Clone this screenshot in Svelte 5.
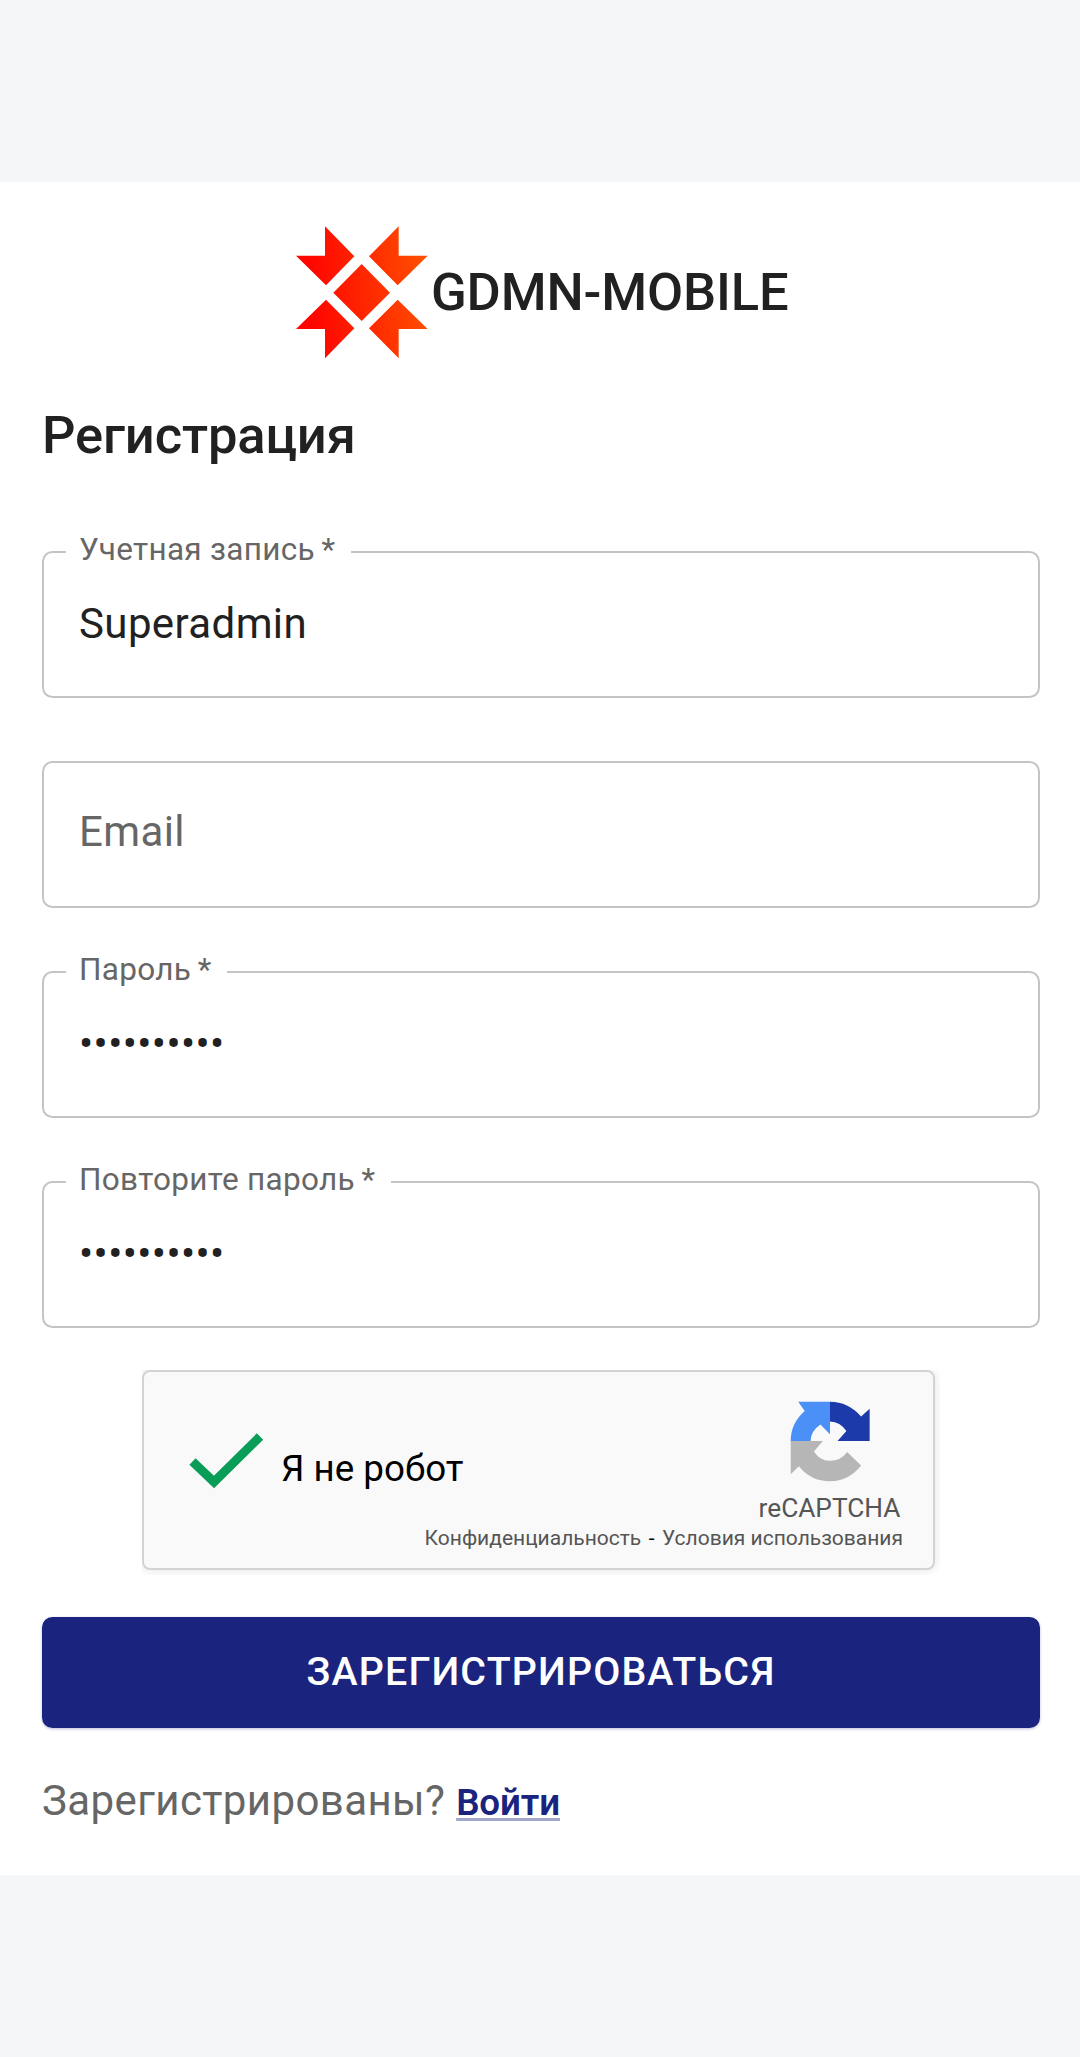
<script>
  const fields = $state([
    { id: 'login', label: 'Учетная запись', type: 'text', value: 'Superadmin', required: true },
    { id: 'email', label: 'Email', type: 'email', value: '', required: false },
    { id: 'password', label: 'Пароль', type: 'password', value: 'superadmin', required: true },
    { id: 'repeat', label: 'Повторите пароль', type: 'password', value: 'superadmin', required: true }
  ]);
</script>

<main class="page">
  <section class="panel">
    <header class="brand">
      <svg class="logo" viewBox="46 164 402 402" aria-hidden="true">
        <defs>
          <linearGradient id="flame" gradientUnits="userSpaceOnUse" x1="90" y1="300" x2="430" y2="270">
            <stop offset="0" stop-color="#ff0500" />
            <stop offset="1" stop-color="#ff4d00" />
          </linearGradient>
        </defs>
        <g fill="url(#flame)">
          <path d="M136 168 224 258 139 345 49 256H136Z" />
          <path d="M357 168V256H444L354 345 268 258Z" />
          <path d="M246 281 331 367 246 452 161 367Z" />
          <path d="M139 388 224 474 136 564V476H49Z" />
          <path d="M354 388 268 474 357 564V476H444Z" />
        </g>
      </svg>
      <span class="name">GDMN-MOBILE</span>
    </header>

    <h1>Регистрация</h1>

    <form class="fields">
      {#each fields as field (field.id)}
        <fieldset>
          {#if field.value}
            <legend><label for={field.id}>{field.label}{field.required ? '\u2009*' : ''}</label></legend>
          {/if}
          <input id={field.id} type={field.type} placeholder={field.label} bind:value={field.value} />
        </fieldset>
      {/each}
    </form>

    <div class="captcha-frame">
      <div class="captcha">
        <div class="check">
          <svg class="tick" viewBox="0 0 76 60" aria-hidden="true">
            <path d="M3.5 30.5 25 51 71 5.5" fill="none" stroke="#0a9d58" stroke-width="9" />
          </svg>
          <span>Я не робот</span>
        </div>
        <div class="badge">
          <svg class="arrows" viewBox="0 0 234 237" aria-hidden="true">
            <path fill="#4a90f7" d="M24 2H117V97L89 69Q61 88 60 117H2Q2 65 43 29Z" />
            <path fill="#1c3aa9" d="M117 2Q170 2 208 45L233 23V117H139L165 88Q147 61 117 60Z" />
            <path fill="#b6b6b6" d="M2 117H96L70 148Q88 176 117 175Q149 175 167 149L208 189Q172 235 117 235Q61 235 26 191L2 214Z" />
          </svg>
          <span class="product">reCAPTCHA</span>
        </div>
        <div class="terms"><span>Конфиденциальность</span><span class="dash">-</span><span>Условия использования</span></div>
      </div>
    </div>

    <button type="button">Зарегистрироваться</button>

    <p class="signin">Зарегистрированы? <a href="#login">Войти</a></p>
  </section>
</main>

<style>
  :global(body) {
    background: #f4f6f8;
  }

  .page {
    box-sizing: border-box;
    height: 2057px;
    padding-top: 182px;
    font-family: Roboto, sans-serif;
    color: #212121;
  }

  .panel {
    box-sizing: border-box;
    height: 1693px;
    padding: 43px 40px 0 42px;
    background: #fff;
  }

  .brand {
    display: flex;
    align-items: center;
    height: 134px;
    padding-left: 253px;
  }

  .logo {
    width: 134px;
    height: 134px;
  }

  .name,
  h1 {
    font-size: 52.5px;
    font-weight: 500;
    line-height: 84px;
    letter-spacing: -0.15px;
  }

  .name {
    margin-left: 2px;
  }

  h1 {
    margin: 34px 0 0;
  }

  .fields {
    display: grid;
    gap: 63px;
    margin-top: 74px;
  }

  fieldset {
    box-sizing: border-box;
    min-width: 0;
    height: 147px;
    margin: 0;
    padding: 0;
    border: 2px solid #c4c4c4;
    border-radius: 10.5px;
  }

  legend {
    height: 2px;
    margin-left: 22px;
    padding: 0 15.6px 0 13px;
    font-size: 31.5px;
    line-height: 2px;
    letter-spacing: 0.00938em;
    color: #666;
  }

  label {
    display: block;
    transform: translateY(-2px);
  }

  input {
    display: block;
    box-sizing: border-box;
    width: 100%;
    height: 136px;
    padding: 0 35px;
    border: 0;
    outline: 0;
    background: none;
    font: 400 42px Roboto, sans-serif;
    letter-spacing: 0.00938em;
    color: #212121;
  }

  legend + input {
    height: 140px;
  }

  input::placeholder {
    color: #666;
    opacity: 1;
  }

  .captcha-frame {
    width: 798px;
    height: 205px;
    margin: 42px 0 0 100px;
    overflow: hidden;
  }

  .captcha {
    box-sizing: border-box;
    display: grid;
    grid-template: 150px 1fr / 1fr 198px;
    width: 793px;
    height: 200px;
    border: 2px solid #d3d3d3;
    border-radius: 8px;
    background: #f9f9f9;
    box-shadow: 0 0 10px 2px rgba(0, 0, 0, 0.08);
    color: #555;
  }

  .check {
    display: flex;
    align-items: flex-start;
    gap: 16px;
    padding: 59px 0 0 45px;
    font-size: 36.75px;
    line-height: 44px;
    color: #000;
  }

  .check span {
    margin-top: 16px;
  }

  .tick {
    width: 76px;
    height: 60px;
  }

  .badge {
    display: flex;
    flex-direction: column;
    align-items: center;
    padding: 29px 9px 0 0;
  }

  .arrows {
    flex: none;
    width: 80px;
    height: 81px;
  }

  .product {
    margin-top: 10px;
    font-size: 26.25px;
    line-height: 32px;
  }

  .terms {
    grid-column: 1 / 3;
    display: flex;
    justify-content: flex-end;
    padding: 3px 30px 0 0;
    font-size: 21px;
    line-height: 26px;
  }

  .dash {
    margin: 0 7.5px;
    color: #000;
  }

  button {
    display: block;
    width: 998px;
    height: 111px;
    margin-top: 42px;
    padding: 0 0 2px;
    border: 0;
    border-radius: 10.5px;
    background: #1a237e;
    box-shadow: 0 1px 3px rgba(26, 35, 126, 0.3);
    font: 500 39.375px Roboto, sans-serif;
    letter-spacing: 0.02857em;
    text-transform: uppercase;
    color: #fff;
  }

  .signin {
    margin: 41px 0 0;
    font-size: 42px;
    line-height: 63px;
    letter-spacing: 0.00938em;
    color: #666;
  }

  a {
    font-size: 36.75px;
    font-weight: 600;
    letter-spacing: -0.1px;
    color: #1a237e;
    text-decoration: underline 3px #a3a7cb;
    text-underline-offset: 3px;
    text-decoration-skip-ink: none;
  }
</style>
